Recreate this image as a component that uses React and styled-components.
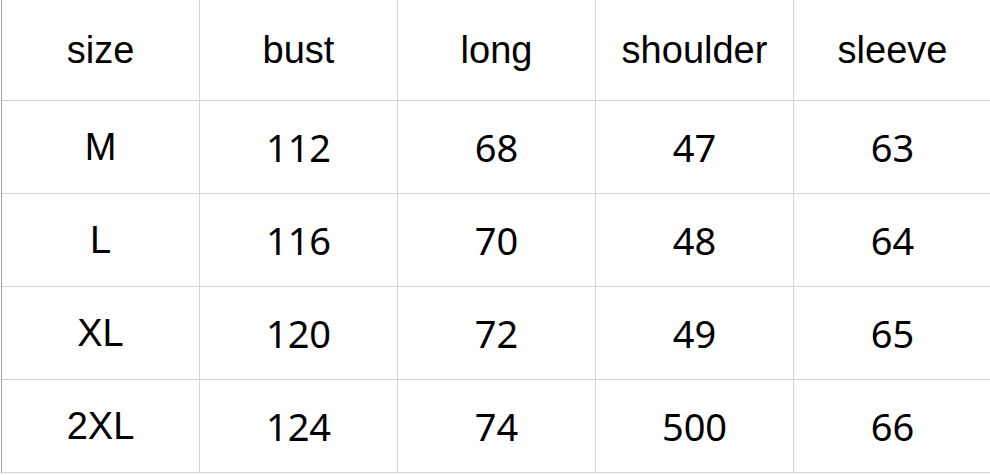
import React from "react";
import styled, { createGlobalStyle } from "styled-components";

const GlobalStyle = createGlobalStyle`
  html, body {
    margin: 0;
    padding: 0;
    background: #ffffff;
  }
`;

const Page = styled.div`
  width: 990px;
  height: 475px;
  overflow: hidden;
  padding-left: 1px;
  background: #ffffff;
`;

const Table = styled.div`
  display: grid;
  grid-template-columns: repeat(5, 198px);
  grid-template-rows: 101px repeat(4, 93px);
  border-left: 1px solid #a3a3a3;
  width: max-content;
`;

const Cell = styled.div`
  box-sizing: border-box;
  display: flex;
  align-items: center;
  justify-content: center;
  border-right: 1px solid #d4d4d4;
  border-bottom: 1px solid #d4d4d4;
  color: #000000;
  font-size: ${({ $num }) => ($num ? "38px" : "38px")};
  font-family: ${({ $num }) =>
    $num ? '"Noto Sans", "Open Sans", sans-serif' : '"Liberation Sans", Arial, sans-serif'};
  padding-top: ${({ $head }) => ($head ? "1px" : "0")};
`;

const headers = ["size", "bust", "long", "shoulder", "sleeve"];

const rows = [
  ["M", "112", "68", "47", "63"],
  ["L", "116", "70", "48", "64"],
  ["XL", "120", "72", "49", "65"],
  ["2XL", "124", "74", "500", "66"],
];

export default function App() {
  return (
    <>
      <GlobalStyle />
      <Page>
        <Table>
          {headers.map((h) => (
            <Cell key={h} $head>
              {h}
            </Cell>
          ))}
          {rows.map((row) =>
            row.map((v, i) => (
              <Cell key={row[0] + i} $num={i > 0}>
                {v}
              </Cell>
            ))
          )}
        </Table>
      </Page>
    </>
  );
}
